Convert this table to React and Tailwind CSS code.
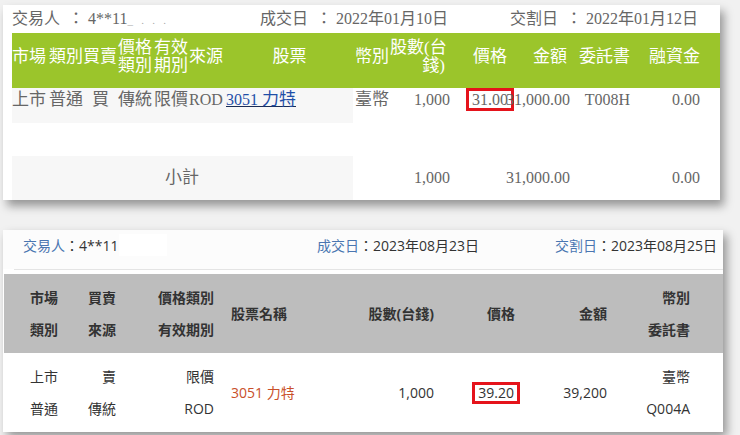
import React from "react";

const serif = { fontFamily: '"Liberation Serif", "Noto Sans CJK TC", serif' };
const sans = { fontFamily: '"Open Sans", "Noto Sans CJK TC", sans-serif' };

function Card1() {
  const cols = [37, 34, 35, 36, 35, 37, 127, 37, 60, 64, 58, 68, 65, 15];
  return (
    <div className="w-[717px] h-[195px] bg-white shadow-[4px_6px_9px_rgba(0,0,0,0.38)] pl-[9px] text-[#666]" style={serif}>
      <div className="h-[28px] flex items-center text-[16px] whitespace-nowrap">
        <div className="w-[248px]">
          交易人 &nbsp;：&nbsp;4**11<span className="text-[#aaa] text-[11px]">_&nbsp;&nbsp;&nbsp;.&nbsp;&nbsp;&nbsp;.&nbsp;&nbsp;&nbsp;.</span>
        </div>
        <div className="w-[250px]">成交日 &nbsp;：&nbsp;2022年01月10日</div>
        <div>交割日 &nbsp;：&nbsp;2022年01月12日</div>
      </div>
      <table className="table-fixed border-collapse w-[708px] text-[17px]">
        <colgroup>
          {cols.map((w, i) => (
            <col key={i} style={{ width: w }} />
          ))}
        </colgroup>
        <tbody>
          <tr className="h-[55px] bg-[#9bc52b] text-white align-middle leading-[18px] whitespace-nowrap">
            <td className="p-0 pb-[8px]">市場</td>
            <td className="p-0 pb-[8px]">類別</td>
            <td className="p-0 pb-[8px]">買賣</td>
            <td className="p-0 pb-[8px]">價格<br />類別</td>
            <td className="p-0 pb-[8px]">有效<br />期別</td>
            <td className="p-0 pb-[8px]">來源</td>
            <td className="p-0 pb-[8px] text-center">股票</td>
            <td className="p-0 pb-[8px] pl-[2px]">幣別</td>
            <td className="p-0 pb-[8px] pr-[5px] text-right">股數(台<br />錢)</td>
            <td className="p-0 pb-[8px] pr-[7px] text-right">價格</td>
            <td className="p-0 pb-[8px] pr-[5px] text-right">金額</td>
            <td className="p-0 pb-[8px] pr-[10px] text-right">委託書</td>
            <td className="p-0 pb-[8px] pr-[5px] text-right">融資金</td>
            <td className="p-0"></td>
          </tr>
          <tr className="h-[35px] align-top leading-[23px] whitespace-nowrap">
            <td className="p-0 bg-[#f7f7f7]">上市</td>
            <td className="p-0 bg-[#f7f7f7]">普通</td>
            <td className="p-0 bg-[#f7f7f7] text-center">買</td>
            <td className="p-0 bg-[#f7f7f7]">傳統</td>
            <td className="p-0 bg-[#f7f7f7]">限價</td>
            <td className="p-0 bg-[#f7f7f7] text-[16px]">ROD</td>
            <td className="p-0 bg-[#f7f7f7]">
              <span className="text-[#1f4fa8] underline decoration-[#1a2b55]"><span className="text-[16px]">3051 </span>力特</span>
            </td>
            <td className="p-0 pl-[2px]">臺幣</td>
            <td className="p-0 text-right text-[16px]">1,000</td>
            <td className="p-0 text-right text-[16px]">
              <span className="inline-block border-[3px] border-[#e5131b] leading-[17px] px-[3px]">31.00</span>
            </td>
            <td className="p-0 text-[16px] pr-[2px]">
              <div className="flex justify-end whitespace-nowrap">31,000.00</div>
            </td>
            <td className="p-0 text-[16px] pr-[10px] text-right">T008H</td>
            <td className="p-0 text-[16px] pr-[5px] text-right">0.00</td>
            <td className="p-0"></td>
          </tr>
          <tr className="h-[33px]">
            <td colSpan={14} className="p-0"></td>
          </tr>
          <tr className="h-[44px] align-middle whitespace-nowrap">
            <td colSpan={7} className="p-0 bg-[#f7f7f7]">
              <div className="pl-[153px]">小計</div>
            </td>
            <td className="p-0"></td>
            <td className="p-0 text-right text-[16px]">1,000</td>
            <td className="p-0"></td>
            <td className="p-0 text-[16px] pr-[2px]">
              <div className="flex justify-end whitespace-nowrap">31,000.00</div>
            </td>
            <td className="p-0"></td>
            <td className="p-0 text-[16px] pr-[5px] text-right">0.00</td>
            <td className="p-0"></td>
          </tr>
        </tbody>
      </table>
    </div>
  );
}

function Card2() {
  const grid = "grid grid-cols-[56px_56px_98px_106px_114px_81px_92px_83px] ml-px";
  return (
    <div className="w-[720px] h-[202px] bg-white shadow-[4px_5px_9px_rgba(0,0,0,0.38)] text-[14px] text-[#333]" style={sans}>
      <div className="h-[30px] flex items-center pl-[20px] whitespace-nowrap bg-[#fcfcfc]">
        <div className="w-[294px] flex items-center">
          <span className="text-[#4a76b1]">交易人</span>：4**11
          <span className="inline-block w-[48px] h-[22px] bg-white ml-[1px]"></span>
        </div>
        <div className="w-[238px]">
          <span className="text-[#4a76b1]">成交日</span>：2023年08月23日
        </div>
        <div>
          <span className="text-[#4a76b1]">交割日</span>：2023年08月25日
        </div>
      </div>
      <div className="h-[9px] bg-[#fcfcfc]"></div>
      <div className="h-px bg-[#e4e4e4] ml-[11px]"></div>
      <div className="h-[4px]"></div>
      <div className={`${grid} h-[79px] bg-[#bdbdbd] items-center leading-[32px] font-bold text-[#333] whitespace-nowrap`}>
        <div className="pl-[26px]">市場<br />類別</div>
        <div className="text-right">買賣<br />來源</div>
        <div className="text-right">價格類別<br />有效期別</div>
        <div className="pl-[17px]">股票名稱</div>
        <div className="text-right">股數(台錢)</div>
        <div className="text-right">價格</div>
        <div className="text-right">金額</div>
        <div className="text-right">幣別<br />委託書</div>
      </div>
      <div className={`${grid} h-[79px] items-center leading-[32px] whitespace-nowrap`}>
        <div className="pl-[26px]">上市<br />普通</div>
        <div className="text-right">賣<br />傳統</div>
        <div className="text-right">限價<br />ROD</div>
        <div className="pl-[17px] text-[#c9502a]">3051 力特</div>
        <div className="text-right">1,000</div>
        <div className="flex justify-end">
          <span className="inline-block border-[3px] border-[#e5131b] leading-[16px] px-[3px] -mr-[5px]">39.20</span>
        </div>
        <div className="text-right">39,200</div>
        <div className="text-right">臺幣<br />Q004A</div>
      </div>
    </div>
  );
}

export default function App() {
  return (
    <div className="w-[740px] h-[435px] overflow-hidden bg-[#f1f1f1] pt-[5px] pl-[3px]">
      <Card1 />
      <div className="h-[30px]"></div>
      <Card2 />
    </div>
  );
}
